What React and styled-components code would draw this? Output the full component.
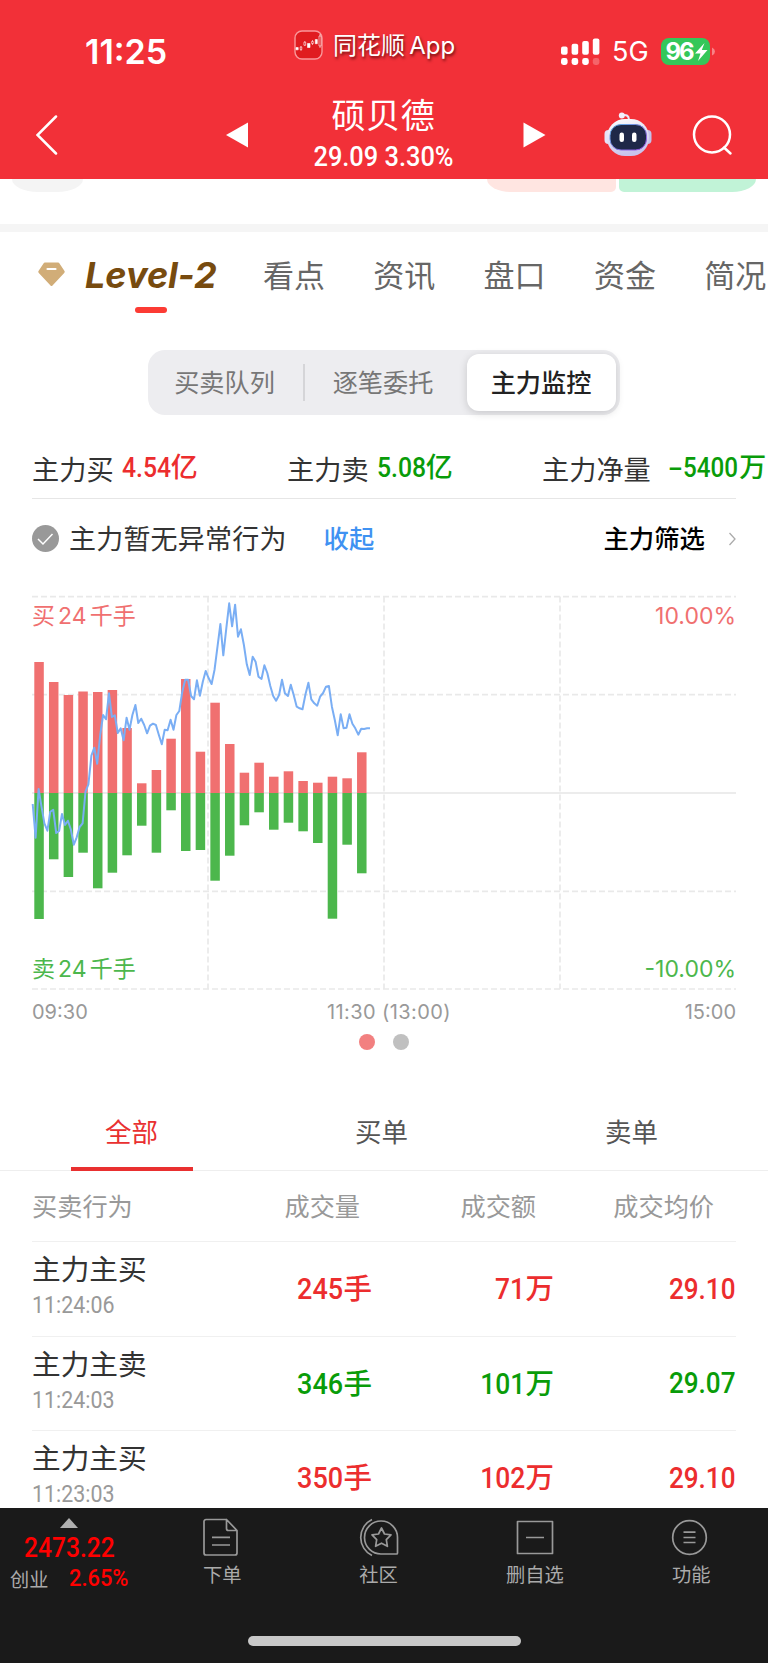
import React, { useState } from 'react';
import styled, { createGlobalStyle } from 'styled-components';

const GlobalStyle = createGlobalStyle`
  * {
    box-sizing: border-box;
  }
  body {
    margin: 0;
    background: #fff;
    font-family: Inter, 'Noto Sans CJK SC', sans-serif;
  }
`;

const Page = styled.div`
  width: 768px;
  height: 1663px;
  display: flex;
  flex-direction: column;
  overflow: hidden;
  background: #fff;
  white-space: nowrap;
`;

// 數字專用字體，較窄；$trim 收掉壓縮後多出的空間
const Num = styled.span`
  display: inline-block;
  margin-right: ${(p) => -(p.$trim || 0)}px;
  font-family: Roboto, sans-serif;
  font-weight: 500;
  font-size: ${(p) => p.$size}px;
  line-height: 1;
  transform: scaleX(${(p) => p.$scale || 0.88});
  transform-origin: ${(p) => p.$origin || 'left'} center;
`;

/* ---------- 頂部 ---------- */
const Header = styled.header`
  flex: none;
  height: 179px;
  color: #fff;
  background: #f23038;
`;

const StatusBar = styled.div`
  height: 90px;
  padding: 13px 52px 0 85px;
  display: grid;
  grid-template-columns: 209px 267px 1fr;
  align-items: center;
`;

const Clock = styled.div`
  font-size: 34px;
  font-weight: 600;
`;

const AppSource = styled.div`
  display: flex;
  align-items: center;
  gap: 10px;
  margin-top: -13px;
  font-size: 24px;
  word-spacing: -2.5px;
  text-shadow: 1px 2px 3px rgba(60, 0, 0, 0.75);
`;

const AppName = styled.span`
  margin-top: -4px;
`;

const Signals = styled.div`
  display: flex;
  align-items: center;
  gap: 12px;
  font-size: 27px;
`;

const NavBar = styled.div`
  height: 89px;
  padding: 0 36px;
  display: grid;
  grid-template-columns: 190px 24px 273px 24px 57px 52px 36px 42px;
  align-items: center;
`;

const Title = styled.div`
  padding-right: 6px;
  text-align: center;
`;

const StockName = styled.div`
  height: 46px;
  font-size: 34px;
  line-height: 45px;
  letter-spacing: 0.6px;
`;

const StockPrice = styled.div`
  height: 38px;
  line-height: 43px;
`;

/* ---------- 內容 ---------- */
const Content = styled.main`
  flex: 1;
  min-height: 0;
  overflow: hidden;
`;

const Peek = styled.div`
  height: 53px;
  padding: 0 12px;
  display: flex;
  align-items: flex-start;
  border-bottom: 8px solid #f5f5f5;
`;

const PeekPill = styled.div`
  width: ${(p) => p.$width}px;
  height: 13px;
  margin-left: ${(p) => p.$left || 0}px;
  background: ${(p) => p.$color};
  border-radius: ${(p) => p.$radius};
`;

const Tabs = styled.nav`
  height: 118px;
  padding: 20px 0 0 38px;
  display: flex;
`;

const Tab = styled.div`
  flex: none;
  width: 110.3px;
  padding-top: 1px;
  font-size: 31px;
  line-height: 46px;
  color: #666;
`;

const LevelTab = styled.div`
  flex: none;
  width: 225px;
  display: flex;
  gap: 20px;
  svg {
    margin-top: 10px;
  }
`;

const LevelName = styled.div`
  width: 131px;
  font-size: 36px;
  font-weight: 700;
  font-style: italic;
  line-height: 47px;
  color: #774b0f;
  &::after {
    content: '';
    display: block;
    width: 32px;
    height: 6px;
    margin: 8px auto 0;
    border-radius: 3px;
    background: #fc3b34;
  }
`;

const Segment = styled.div`
  width: 472px;
  height: 65px;
  margin-left: 148px;
  padding: 4px;
  display: grid;
  grid-template-columns: 151px 2px 162px 149px;
  align-items: center;
  border-radius: 17px;
  background: #ededf0;
`;

const SegmentItem = styled.button`
  height: 57px;
  padding: 0 ${(p) => (p.$active ? 1 : 6)}px 4px 0;
  border: 0;
  border-radius: 12px;
  font-family: inherit;
  font-size: 25.2px;
  font-weight: ${(p) => (p.$active ? 500 : 400)};
  color: ${(p) => (p.$active ? '#222' : '#777')};
  background: ${(p) => (p.$active ? '#fff' : 'transparent')};
  box-shadow: ${(p) => (p.$active ? '0 2px 8px rgba(0, 0, 0, 0.16)' : 'none')};
`;

const SegmentLine = styled.div`
  height: 37px;
  background: #d5d5d8;
`;

const Summary = styled.div`
  height: 84px;
  margin: 0 32px;
  padding-top: 25px;
  display: grid;
  grid-template-columns: 255px 255px 1fr;
  border-bottom: 1px solid #e6e6e6;
`;

const SummaryItem = styled.div`
  display: flex;
  align-items: center;
  height: 56px;
  gap: ${(p) => p.$gap || 8}px;
  font-size: 27.2px;
  color: #333;
  & > span {
    margin-top: -5px;
  }
`;

const Amount = styled.span`
  display: flex;
  align-items: baseline;
  font-size: ${(p) => p.$size || 27}px;
  font-weight: 500;
  color: ${(p) => (p.$up ? '#ec2d2e' : '#099c09')};
`;

const ActionRow = styled.div`
  height: 80px;
  padding: 0 32px 1px;
  display: flex;
  align-items: center;
  font-size: 27px;
  color: #333;
  & > span {
    padding-bottom: 3px;
  }
`;

const ActionText = styled.span`
  margin-left: 10px;
  letter-spacing: 0.2px;
`;

const Collapse = styled.span`
  margin-left: 37px;
  font-size: 25.3px;
  font-weight: 500;
  color: #3f92f2;
`;

const Filter = styled.span`
  margin: 0 23px 0 auto;
  font-size: 25.4px;
  font-weight: 500;
  color: #000;
`;

const ChartBox = styled.section`
  height: 394px;
  margin: 17px 32px 0;
  display: grid;
  grid-template-rows: 1fr 1fr;
`;

const ChartLayer = styled.svg`
  grid-area: 1 / 1 / 3 / 2;
  overflow: visible;
`;

const ChartLabels = styled.div`
  grid-row: ${(p) => p.$row};
  grid-column: 1;
  align-self: ${(p) => (p.$row === 1 ? 'start' : 'end')};
  display: flex;
  justify-content: space-between;
  font-size: 23px;
  line-height: 41px;
  word-spacing: -3.4px;
  color: ${(p) => (p.$row === 1 ? '#f07070' : '#4cb74c')};
`;

const TimeAxis = styled.div`
  height: 30px;
  margin: 0 32px;
  padding-top: 10px;
  display: grid;
  grid-template-columns: 295px 1fr auto;
  font-size: 20px;
  line-height: 24px;
  color: #999;
`;

const MiddleTime = styled.span`
  letter-spacing: 0.4px;
`;

const Dots = styled.div`
  height: 45px;
  padding-bottom: 2px;
  display: flex;
  justify-content: center;
  align-items: center;
  gap: 18px;
`;

const Dot = styled.i`
  width: 16px;
  height: 16px;
  border-radius: 50%;
  background: ${(p) => (p.$active ? '#f28080' : '#c0c0c0')};
`;

const OrderTabs = styled.div`
  height: 106px;
  padding: 29px 11px 0 7px;
  display: grid;
  grid-template-columns: repeat(3, 1fr);
  border-bottom: 1px solid #eee;
`;

const OrderTab = styled.div`
  display: flex;
  flex-direction: column;
  align-items: center;
  font-size: 26.5px;
  line-height: 72px;
  padding-top: 1px;
  color: ${(p) => (p.$active ? '#e93030' : '#555')};
  &::after {
    content: '';
    width: 122px;
    height: 4px;
    background: ${(p) => (p.$active ? '#e93030' : 'transparent')};
  }
`;

const OrderTabText = styled.span`
  margin-right: 1px;
  padding-top: 1px;
  height: 72px;
`;

const TableRow = styled.div`
  height: ${(p) => p.$height || 94.5}px;
  margin: 0 32px;
  display: grid;
  grid-template-columns: 160px 180px 182px 182px;
  align-items: center;
  border-bottom: 1px solid #f0f0f0;
`;

const HeadCell = styled.div`
  padding: 0 ${(p) => p.$inset || 0}px 2px 0;
  text-align: ${(p) => (p.$inset ? 'right' : 'left')};
  font-size: 25.2px;
  color: #999;
`;

const Behavior = styled.div`
  margin-top: -4px;
  font-size: 28.7px;
  line-height: 38px;
  color: #333;
`;

const Time = styled(Num)`
  display: block;
  padding-bottom: 1px;
  font-weight: 400;
  line-height: 32px;
  color: #999;
`;

const Cell = styled.div`
  display: flex;
  justify-content: flex-end;
  padding-bottom: ${(p) => p.$lift || 0}px;
`;

/* ---------- 底部 ---------- */
const Footer = styled.footer`
  flex: none;
  height: 155px;
  background: #1a1a1a;
`;

const FooterBar = styled.div`
  height: 128px;
  display: grid;
  grid-template-columns: 144px repeat(4, 156.4px);
`;

const IndexBox = styled.div`
  padding: 10px 0 0 10px;
  color: #f00;
`;

const ArrowUp = styled.div`
  width: 0;
  margin-left: 50px;
  border: 9px solid transparent;
  border-top: 0;
  border-bottom: 10px solid #b0b0b0;
`;

const IndexValue = styled.div`
  height: 34px;
  padding: 6px 0 0 14px;
  line-height: 28px;
`;

const IndexName = styled.div`
  display: flex;
  align-items: center;
  gap: 21px;
  font-size: 19.2px;
  line-height: 34px;
  color: #aaa;
  padding-top: 1px;
`;

const Red = styled.span`
  display: flex;
  padding-bottom: 4px;
  color: #f00;
`;

const FooterItem = styled.div`
  display: flex;
  flex-direction: column;
  align-items: center;
  padding-top: 10px;
  font-size: 19.3px;
  line-height: 34px;
  color: #aaa;
`;

const HomeBar = styled.div`
  width: 273px;
  height: 10px;
  margin: 0 auto;
  border-radius: 5px;
  background: #c8c8c8;
`;

/* ---------- 圖示 ---------- */
const AppLogo = () => (
  <svg width="29" height="30" viewBox="0 0 29 30">
    <rect x="1" y="1" width="27" height="28" rx="7" fill="#e01c20" stroke="#f9979a" strokeWidth="1.4" />
    <g fill="#fff" stroke="#fff" strokeWidth="0.6">
      <path d="M2 17.500h2.200v2.300H2zM13.500 13.500h2.500v4h-2.500zM21.300 9.500h2v4.200h-2z" />
      <path d="M7 16v5M10.800 11v5M18.500 10v5M26 4v14" />
      <path d="M6.200 17h1.600v2.500H6.200zM9.900 12.200h1.800v3H9.900zM17.600 11.500h1.700v2h-1.700zM25 6h2v10h-2z" fill="#e01c20" />
    </g>
  </svg>
);

const SignalIcon = () => (
  <svg width="39" height="28" viewBox="0 0 39 28" fill="#fff">
    {[0, 10.6, 21.2, 31.8].map((x, i) => (
      <g key={x}>
        <rect x={x} y={8.5 - i * 2.7} width="6.6" height={8.3 + i * 2.7} rx="2" />
        <rect x={x} y="20" width="6.6" height="7" rx="2.400" opacity={i === 3 ? 0.25 : 1} />
      </g>
    ))}
  </svg>
);

const BatteryIcon = () => (
  <svg width="55" height="27" viewBox="0 0 55 27">
    <rect width="49" height="27" rx="8" fill="#34c759" />
    <path d="M51 9.500q3 1.500 3 4t-3 4z" fill="#fff" opacity="0.4" />
    <text x="4.500" y="22" fill="#fff" fontSize="24" fontWeight="700" fontFamily="Inter" textLength="29">
      96
    </text>
    <path d="M43.500 5l-9.500 10.500h5.500L37 23l9.500-11h-5.700z" fill="#fff" />
  </svg>
);

const BackIcon = () => (
  <svg width="22" height="40" viewBox="0 0 22 40" fill="none" stroke="#fff" strokeWidth="2.500" strokeLinecap="round">
    <path d="M20 1.500L1.500 20 20 38.500" />
  </svg>
);

const PrevIcon = () => (
  <svg width="24" height="26" viewBox="0 0 24 26" fill="#fff">
    <path d="M0 13L22 .5v25z" />
  </svg>
);

const NextIcon = () => (
  <svg width="24" height="26" viewBox="0 0 24 26" fill="#fff">
    <path d="M22.500 13L.5.5v25z" />
  </svg>
);

const RobotIcon = () => (
  <svg width="48" height="46" viewBox="0 0 48 46">
    <defs>
      <linearGradient id="shell" x1="0" y1="0" x2="0.300" y2="1">
        <stop offset="0" stopColor="#fff" />
        <stop offset="1" stopColor="#c9c4ec" />
      </linearGradient>
      <linearGradient id="rim" x1="0" y1="0" x2="1" y2="1">
        <stop offset="0" stopColor="#5fb4e6" />
        <stop offset="1" stopColor="#9b4be0" />
      </linearGradient>
    </defs>
    <path d="M17.500 3.500q7-2 7.500 4" fill="none" stroke="#e9e6f8" strokeWidth="2" />
    <circle cx="17.800" cy="3.500" r="3" fill="#f3effc" />
    <rect x="0.500" y="18" width="8" height="14" rx="4" fill="#e6e3f7" />
    <rect x="39.500" y="18" width="8" height="14" rx="4" fill="#c5c0ea" />
    <rect x="3" y="7" width="42" height="37" rx="18" fill="url(#shell)" />
    <rect x="6" y="12.500" width="36.500" height="25.500" rx="11" fill="#1f2848" stroke="url(#rim)" />
    <rect x="15.500" y="20.500" width="4.500" height="9.500" rx="2.200" fill="#fff" />
    <rect x="28" y="20.500" width="4.500" height="9.500" rx="2.200" fill="#fff" />
  </svg>
);

const SearchIcon = () => (
  <svg width="42" height="42" viewBox="0 0 42 42" fill="none" stroke="#fff" strokeWidth="2.500" strokeLinecap="round">
    <circle cx="20" cy="20.500" r="18" />
    <path d="M32 33.500l6.500 6" />
  </svg>
);

const DiamondIcon = () => (
  <svg width="27" height="25" viewBox="0 0 27 25">
    <path d="M5.500 1.500Q6 .5 7 .5h13q1 0 1.500 1l5 7.500q.6 1-.3 2L14.500 23.500q-1 1-2 0L.8 11q-.9-1-.3-2z" fill="#d1ad78" />
    <path d="M9.500 7h8" stroke="#fff" strokeWidth="2.200" strokeLinecap="round" />
  </svg>
);

const CheckIcon = () => (
  <svg width="27" height="27" viewBox="0 0 27 27">
    <circle cx="13.500" cy="13.500" r="13.500" fill="#999" />
    <path d="M6 14l5 5 9.500-10" fill="none" stroke="#fff" strokeWidth="1.500" />
  </svg>
);

const MoreIcon = () => (
  <svg width="8" height="14" viewBox="0 0 8 14" fill="none" stroke="#aaa" strokeWidth="1.300">
    <path d="M1.500 1L7 7l-5.500 6" />
  </svg>
);

const footerIcons = {
  order: (
    <path d="M25.500 1.500H5a2 2 0 0 0-2 2V35a2 2 0 0 0 2 2h29a2 2 0 0 0 2-2V12.500L25.500 1.500V10.500a2 2 0 0 0 2 2H36M11 19.300h18M11 27h18" />
  ),
  community: (
    <>
      <path d="M38.500 36H23.500A16.500 16.500 0 1 1 39.500 20v15a1 1 0 0 1-1 1zM14 1.500a20 20 0 0 0 0 36" />
      <path d="M23.500 10l3 6 6.500.9-4.700 4.700 1.100 6.700-5.900-3.100-5.900 3.100 1.100-6.700-4.700-4.700 6.500-.9z" />
    </>
  ),
  remove: <path d="M3.500 3.500h35v32h-35zM12 19.500h18" />,
  menu: (
    <>
      <circle cx="19.500" cy="19.500" r="16.800" />
      <path d="M13.500 14.200h12M13.500 19.500h12M13.500 24.500h12" />
    </>
  ),
};

const FooterIcon = ({ name }) => (
  <svg width="42" height="40" viewBox="0 0 42 40" fill="none" stroke="#999" strokeWidth="1.700" strokeLinejoin="round">
    {footerIcons[name]}
  </svg>
);

/* ---------- 資料 ---------- */
const tabs = ['看点', '资讯', '盘口', '资金', '简况'];

const buys = [
  131, 111, 98, 101.5, 101, 103, 65, 9.7, 23, 54.3, 114, 41.3, 90.3, 49, 20.3, 30.3, 16.3, 21.7, 12, 10.3, 16.3, 14.7,
  40.7,
];

const sells = [
  126, 66.3, 84, 59.7, 95.3, 79.7, 62.3, 32.7, 59.7, 17.3, 58, 57, 87.7, 62.7, 32.3, 19.3, 36.7, 29.7, 38.3, 50, 125.7,
  51.7, 80.3,
];

// 每分鐘一點，y 為三倍精度，上緣為 34
const trend = [
  657, 758, 612, 665, 715, 737, 680, 674, 744, 738, 687, 720, 707, 733, 779, 757, 726, 715, 620, 598, 512, 488, 536,
  450, 390, 403, 325, 396, 391, 444, 430, 466, 398, 434, 390, 360, 414, 401, 420, 445, 422, 416, 420, 449, 478, 434,
  436, 404, 434, 390, 378, 320, 284, 284, 333, 343, 286, 332, 290, 258, 280, 297, 255, 185, 117, 211, 130, 55, 124, 59,
  155, 133, 180, 238, 270, 215, 230, 275, 282, 241, 264, 303, 333, 347, 330, 284, 325, 333, 299, 330, 365, 370, 373,
  328, 293, 343, 355, 362, 335, 324, 305, 303, 365, 405, 451, 388, 430, 428, 388, 416, 430, 449, 431, 432, 430, 430,
];

const orders = [
  { name: '主力主买', time: '11:24:06', volume: 245, amount: 71, price: '29.10', up: true },
  { name: '主力主卖', time: '11:24:03', volume: 346, amount: 101, price: '29.07', up: false },
  { name: '主力主买', time: '11:23:03', volume: 350, amount: 102, price: '29.10', up: true },
];

const footerItems = [
  { icon: 'order', text: '下单' },
  { icon: 'community', text: '社区' },
  { icon: 'remove', text: '删自选' },
  { icon: 'menu', text: '功能' },
];

function Chart() {
  const points = trend.map((y, i) => `${(0.7 + i * 2.933).toFixed(1)},${((y - 33) / 3).toFixed(1)}`).join(' ');

  return (
    <ChartBox>
      <ChartLayer width="704" height="394" viewBox="0 0 704 394">
        <g stroke="#e9e9e9" strokeWidth="1.700" strokeDasharray="6 3">
          <path d="M0 .7H704M0 98.700H704M0 295.300H704M0 393H704" />
          <path d="M176 .5V393M352 .5V393M528 .5V393" />
        </g>
        <path d="M0 197H704" stroke="#e6e6e6" strokeWidth="1.500" />
        {buys.map((h, i) => (
          <rect key={i} x={2.3 + i * 14.67} y={197 - h} width="9.500" height={h} fill="#f07070" />
        ))}
        {sells.map((h, i) => (
          <rect key={i} x={2.3 + i * 14.67} y="197" width="9.500" height={h} fill="#4cb74c" />
        ))}
        <polyline points={points} fill="none" stroke="#7aaef4" strokeWidth="2" strokeLinejoin="round" />
      </ChartLayer>
      <ChartLabels $row={1}>
        <span>买 24 千手</span>
        <span>10.00%</span>
      </ChartLabels>
      <ChartLabels $row={2}>
        <span>卖 24 千手</span>
        <span>-10.00%</span>
      </ChartLabels>
    </ChartBox>
  );
}

export default function App() {
  // 目前選中的子頁籤
  const [segment, setSegment] = useState('主力监控');

  return (
    <>
      <GlobalStyle />
      <Page>
        <Header>
          <StatusBar>
            <Clock>11:25</Clock>
            <AppSource>
              <AppLogo />
              <AppName>同花顺 App</AppName>
            </AppSource>
            <Signals>
              <SignalIcon />
              5G
              <BatteryIcon />
            </Signals>
          </StatusBar>
          <NavBar>
            <BackIcon />
            <PrevIcon />
            <Title>
              <StockName>硕贝德</StockName>
              <StockPrice>
                <Num $size={27} $scale={0.94} $origin="center">
                  29.09 3.30%
                </Num>
              </StockPrice>
            </Title>
            <NextIcon />
            <span />
            <RobotIcon />
            <span />
            <SearchIcon />
          </NavBar>
        </Header>

        <Content>
          <Peek>
            <PeekPill $width={71} $color="#f4f4f4" $radius="0 0 26px 26px / 0 0 13px 13px" />
            <PeekPill $left={404} $width={129} $color="#ffe5e1" $radius="0 0 5px 24px / 0 0 5px 13px" />
            <PeekPill $left={3} $width={137} $color="#c1f3d7" $radius="0 0 24px 5px / 0 0 13px 5px" />
          </Peek>

          <Tabs>
            <LevelTab>
              <DiamondIcon />
              <LevelName>Level-2</LevelName>
            </LevelTab>
            {tabs.map((tab) => (
              <Tab key={tab}>{tab}</Tab>
            ))}
          </Tabs>

          <Segment>
            <SegmentItem $active={segment === '买卖队列'} onClick={() => setSegment('买卖队列')}>
              买卖队列
            </SegmentItem>
            <SegmentLine />
            <SegmentItem $active={segment === '逐笔委托'} onClick={() => setSegment('逐笔委托')}>
              逐笔委托
            </SegmentItem>
            <SegmentItem $active={segment === '主力监控'} onClick={() => setSegment('主力监控')}>
              主力监控
            </SegmentItem>
          </Segment>

          <Summary>
            <SummaryItem>
              主力买
              <Amount $up>
                <Num $size={27.5} $scale={0.9} $trim={5.4}>
                  4.54
                </Num>
                亿
              </Amount>
            </SummaryItem>
            <SummaryItem>
              主力卖
              <Amount>
                <Num $size={27.5} $scale={0.9} $trim={5.4}>
                  5.08
                </Num>
                亿
              </Amount>
            </SummaryItem>
            <SummaryItem $gap={17}>
              主力净量
              <Amount>
                <Num $size={27.5} $scale={1.6} $trim={-6}>
                  -
                </Num>
                <Num $size={27.5} $trim={6.5}>
                  5400
                </Num>
                万
              </Amount>
            </SummaryItem>
          </Summary>

          <ActionRow>
            <CheckIcon />
            <ActionText>主力暂无异常行为</ActionText>
            <Collapse>收起</Collapse>
            <Filter>主力筛选</Filter>
            <MoreIcon />
          </ActionRow>

          <Chart />
          <TimeAxis>
            <span>09:30</span>
            <MiddleTime>11:30 (13:00)</MiddleTime>
            <span>15:00</span>
          </TimeAxis>
          <Dots>
            <Dot $active />
            <Dot />
          </Dots>

          <OrderTabs>
            <OrderTab $active>
              <OrderTabText>全部</OrderTabText>
            </OrderTab>
            <OrderTab>
              <OrderTabText>买单</OrderTabText>
            </OrderTab>
            <OrderTab>
              <OrderTabText>卖单</OrderTabText>
            </OrderTab>
          </OrderTabs>

          <TableRow $height={71}>
            <HeadCell>买卖行为</HeadCell>
            <HeadCell $inset={12}>成交量</HeadCell>
            <HeadCell $inset={18}>成交额</HeadCell>
            <HeadCell $inset={22}>成交均价</HeadCell>
          </TableRow>
          {orders.map((order) => (
            <TableRow key={order.time}>
              <div>
                <Behavior>{order.name}</Behavior>
                <Time $size={23.5} $scale={0.91}>
                  {order.time}
                </Time>
              </div>
              <Cell $lift={4}>
                <Amount $up={order.up} $size={28.5}>
                  <Num $size={30} $scale={0.9} $origin="right">
                    {order.volume}
                  </Num>
                  手
                </Amount>
              </Cell>
              <Cell $lift={4}>
                <Amount $up={order.up} $size={28.5}>
                  <Num $size={30} $origin="right">
                    {order.amount}
                  </Num>
                  万
                </Amount>
              </Cell>
              <Cell>
                <Amount $up={order.up}>
                  <Num $size={30} $scale={0.87} $origin="right">
                    {order.price}
                  </Num>
                </Amount>
              </Cell>
            </TableRow>
          ))}
        </Content>

        <Footer>
          <FooterBar>
            <IndexBox>
              <ArrowUp />
              <IndexValue>
                <Num $size={28}>2473.22</Num>
              </IndexValue>
              <IndexName>
                创业
                <Red>
                  <Num $size={23} $scale={0.95}>
                    2.65%
                  </Num>
                </Red>
              </IndexName>
            </IndexBox>
            {footerItems.map((item) => (
              <FooterItem key={item.icon}>
                <FooterIcon name={item.icon} />
                {item.text}
              </FooterItem>
            ))}
          </FooterBar>
          <HomeBar />
        </Footer>
      </Page>
    </>
  );
}
